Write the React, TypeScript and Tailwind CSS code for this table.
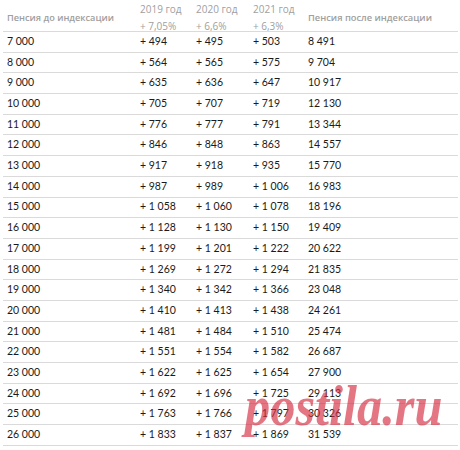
const rows: string[][] = [
  ['7 000', '+ 494', '+ 495', '+ 503', '8 491'],
  ['8 000', '+ 564', '+ 565', '+ 575', '9 704'],
  ['9 000', '+ 635', '+ 636', '+ 647', '10 917'],
  ['10 000', '+ 705', '+ 707', '+ 719', '12 130'],
  ['11 000', '+ 776', '+ 777', '+ 791', '13 344'],
  ['12 000', '+ 846', '+ 848', '+ 863', '14 557'],
  ['13 000', '+ 917', '+ 918', '+ 935', '15 770'],
  ['14 000', '+ 987', '+ 989', '+ 1 006', '16 983'],
  ['15 000', '+ 1 058', '+ 1 060', '+ 1 078', '18 196'],
  ['16 000', '+ 1 128', '+ 1 130', '+ 1 150', '19 409'],
  ['17 000', '+ 1 199', '+ 1 201', '+ 1 222', '20 622'],
  ['18 000', '+ 1 269', '+ 1 272', '+ 1 294', '21 835'],
  ['19 000', '+ 1 340', '+ 1 342', '+ 1 366', '23 048'],
  ['20 000', '+ 1 410', '+ 1 413', '+ 1 438', '24 261'],
  ['21 000', '+ 1 481', '+ 1 484', '+ 1 510', '25 474'],
  ['22 000', '+ 1 551', '+ 1 554', '+ 1 582', '26 687'],
  ['23 000', '+ 1 622', '+ 1 625', '+ 1 654', '27 900'],
  ['24 000', '+ 1 692', '+ 1 696', '+ 1 725', '29 113'],
  ['25 000', '+ 1 763', '+ 1 766', '+ 1 797', '30 326'],
  ['26 000', '+ 1 833', '+ 1 837', '+ 1 869', '31 539'],
];

const years = [
  { year: '2019 год', rate: '+ 7,05%' },
  { year: '2020 год', rate: '+ 6,6%' },
  { year: '2021 год', rate: '+ 6,3%' },
];

const cols = 'grid grid-cols-[133px_56px_57px_55px_1fr]';

export default function App() {
  return (
    <div className="relative w-[460px] h-[450px] bg-white overflow-hidden">
      <div className="ml-[3px] mr-[2px]">
        <div
          className={`${cols} h-[32px] items-center border-b border-[#dadada] text-[#a0a0a0]`}
          style={{ fontFamily: '"Open Sans", sans-serif' }}
        >
          <div className="pl-[4px] font-semibold text-[9.2px] whitespace-nowrap">Пенсия до индексации</div>
          {years.map((y) => (
            <div key={y.year} className="pl-[4px] text-[10px] leading-[17px] pt-[1px]">
              <div>{y.year}</div>
              <div>{y.rate}</div>
            </div>
          ))}
          <div className="pl-[4px] font-semibold text-[9.3px] whitespace-nowrap">Пенсия после индексации</div>
        </div>

        {rows.map((r) => (
          <div
            key={r[0]}
            className={`${cols} h-[20.7px] items-center border-b border-[#dadada] text-[#1a1a1a] text-[10.5px]`}
            style={{ fontFamily: 'Lato, sans-serif' }}
          >
            {r.map((cell, i) => (
              <div key={i} className="pl-[4px] whitespace-nowrap">
                {cell}
              </div>
            ))}
          </div>
        ))}
      </div>

      {/* watermark */}
      <div
        className="absolute left-[245px] top-[376px] text-[56px] leading-[60px] font-bold italic text-[rgba(214,45,65,0.65)] scale-x-90 origin-left pointer-events-none"
        style={{ fontFamily: '"Liberation Serif", serif' }}
      >
        postila.ru
      </div>
    </div>
  );
}
